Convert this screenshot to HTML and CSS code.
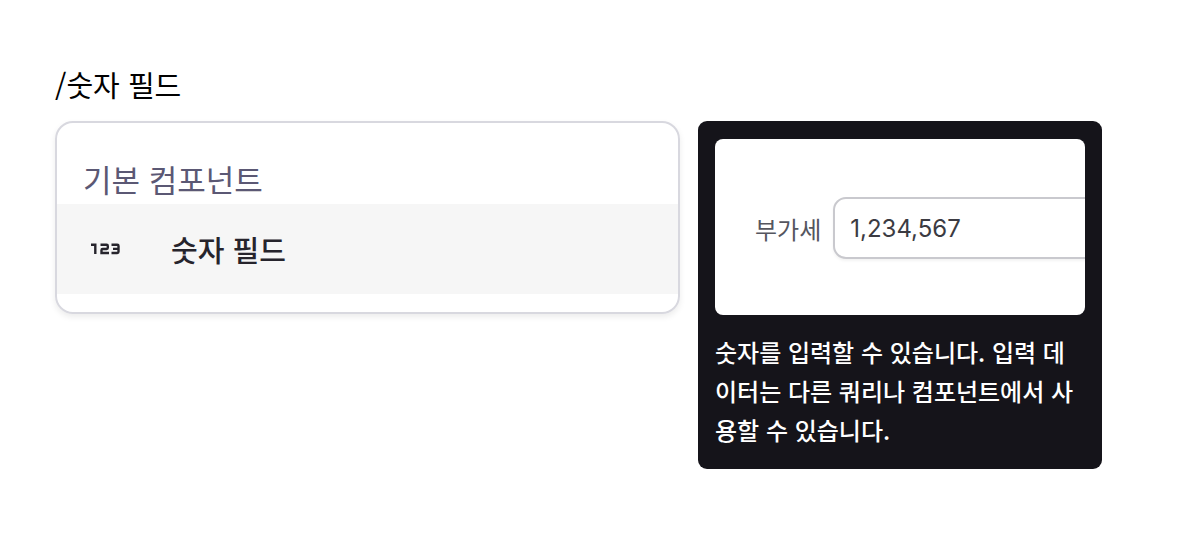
FILE: index.html
```html
<!DOCTYPE html>
<html lang="ko">
<head>
    <meta charset="UTF-8">
    <meta name="viewport" content="width=device-width, initial-scale=1.0">
    <title>숫자 필드</title>
    <link rel="stylesheet" href="styles.css">
</head>
<body>
    <main class="editor">
        <p class="command">/숫자 필드</p>

        <div class="panels">
            <section class="menu">
                <h2 class="menu-title">기본 컴포넌트</h2>
                <button type="button" class="menu-item">
                    <svg class="menu-icon" width="30" height="12" viewBox="0 0 30 12" aria-hidden="true">
                        <path d="M0 1.8H4.3V11M9.5 1.8H15.6Q16.8 1.8 16.8 3V4.8Q16.8 6 15.6 6H11.7Q10.5 6 10.5 7.2V10H18M20.5 1.8H26.3Q27.5 1.8 27.5 3V8.8Q27.5 10 26.3 10H20.5M22 5.9H27.5"/>
                    </svg>
                    <span>숫자 필드</span>
                </button>
            </section>

            <aside class="tooltip">
                <div class="preview">
                    <label class="preview-label" for="vat">부가세</label>
                    <input class="preview-input" id="vat" type="text" value="1,234,567">
                </div>
                <p class="tooltip-text">숫자를 입력할 수 있습니다. 입력 데이터는 다른 쿼리나 컴포넌트에서 사용할 수 있습니다.</p>
            </aside>
        </div>
    </main>
</body>
</html>
```

FILE: styles.css
```css
* {
    box-sizing: border-box;
}
body {
    margin: 0;
    background: #fff;
    font-family: "Noto Sans CJK KR", sans-serif;
}
.editor {
    padding: 64px 78px 64px 55px;
}
.command {
    margin: 0 0 17px;
    font-size: 29px;
    line-height: 40px;
    color: #000;
}
.panels {
    display: flex;
    align-items: flex-start;
    gap: 18px;
}

.menu {
    flex: 1;
    padding: 36px 0 18px;
    border: 2px solid #d8d8df;
    border-radius: 18px;
    box-shadow: 0 3px 6px rgba(0, 0, 0, 0.08);
}
.menu-title {
    margin: 0;
    padding: 0 26px 5px;
    font-size: 31px;
    font-weight: 400;
    line-height: 40px;
    color: #5b5874;
}
.menu-item {
    display: flex;
    align-items: center;
    gap: 50px;
    width: 100%;
    height: 90px;
    padding: 0 34px;
    border: 0;
    background: #f6f6f6;
    font-family: inherit;
    font-size: 29px;
    font-weight: 500;
    line-height: 40px;
    color: #26242c;
    text-align: left;
    cursor: pointer;
}
.menu-icon {
    fill: none;
    stroke: #26242c;
    stroke-width: 2.4;
}

.tooltip {
    flex: 0 0 404px;
    min-width: 0;
    padding: 18px 17px 20px;
    border-radius: 9px;
    background: #15141a;
}
.preview {
    display: flex;
    align-items: center;
    gap: 12px;
    height: 176px;
    padding: 2px 0 0 40px;
    border-radius: 8px;
    background: #fff;
    overflow: hidden;
}
.preview-label {
    flex: none;
    font-size: 24px;
    line-height: 39px;
    color: #55565f;
}
.preview-input {
    flex: 0 0 300px;
    height: 62px;
    padding: 0 15px;
    border: 2px solid #c9c9ce;
    border-radius: 13px;
    background: #fff;
    box-shadow: 0 2px 3px rgba(0, 0, 0, 0.05);
    font-family: Inter, sans-serif;
    font-size: 24px;
    color: #3b3b42;
}
.tooltip-text {
    margin: 17px 0 0;
    font-size: 24px;
    font-weight: 500;
    line-height: 39px;
    color: #fff;
}
```
